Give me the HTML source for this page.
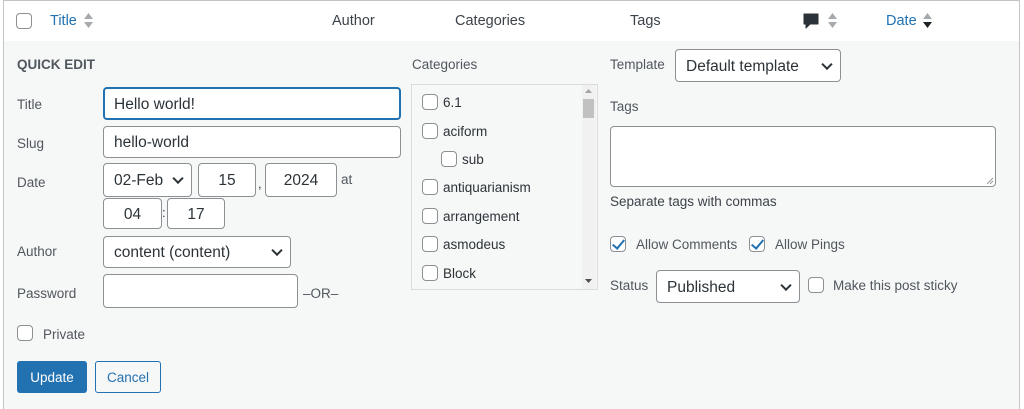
<!DOCTYPE html>
<html><head><meta charset="utf-8"><style>
*{box-sizing:border-box}
body{margin:0;width:1024px;height:409px;background:#fff;font-family:"Liberation Sans",Arial,sans-serif;font-size:14.5px;color:#3c434a;position:relative;overflow:hidden}
.a{position:absolute;white-space:nowrap}
.panel{position:absolute;left:3px;top:41px;width:1017px;height:368px;background:#f6f7f7;border-left:1px solid #c3c4c7;border-right:1px solid #c3c4c7}
.hdr{position:absolute;left:3px;top:0;width:1017px;height:42px;border:1px solid #c3c4c7;background:#fff}
.cb{position:absolute;width:16px;height:16px;border:1px solid #8c8f94;border-radius:4px;background:#fff}
.in{position:absolute;border:1px solid #8c8f94;border-radius:4px;background:#fff;font-size:15.5px;color:#2c3338;padding-left:10px;padding-top:2px;display:flex;align-items:center}
.c{justify-content:center;padding-left:0}
.lbl{position:absolute;font-size:13.5px;color:#50575e;white-space:nowrap}
.chev{position:absolute;right:9px;top:50%;width:8px;height:8px;border-right:2px solid #2c3338;border-bottom:2px solid #2c3338;transform:translateY(-70%) rotate(45deg)}
.ck::after{content:"";position:absolute;left:4px;top:0px;width:5px;height:10px;border-right:2px solid #2271b1;border-bottom:2px solid #2271b1;transform:rotate(40deg)}
.item{position:absolute;font-size:13.5px;color:#2c3338}
</style></head><body>
<div class="hdr"></div>
<div class="cb" style="left:16px;top:13px"></div>
<div class="a" style="left:50px;top:13px;color:#2271b1">Title</div>
<svg class="a" style="left:84px;top:12px" width="9" height="17"><path d="M0 7L4.5 1L9 7Z M0 10L4.5 16L9 10Z" fill="#a7aaad"/></svg>
<div class="a" style="left:332px;top:13px">Author</div>
<div class="a" style="left:455px;top:13px">Categories</div>
<div class="a" style="left:630px;top:13px">Tags</div>
<svg class="a" style="left:803px;top:13px" width="16" height="17"><path d="M1 1H15V11H7L3 15V11H1Z" fill="#2c3338" stroke="#2c3338" stroke-linejoin="round"/></svg>
<svg class="a" style="left:828px;top:12px" width="9" height="17"><path d="M0 7L4.5 1L9 7Z M0 10L4.5 16L9 10Z" fill="#a7aaad"/></svg>
<div class="a" style="left:886px;top:13px;color:#2271b1">Date</div>
<svg class="a" style="left:923px;top:12px" width="9" height="17"><path d="M0 7L4.5 1L9 7Z" fill="#a7aaad"/><path d="M0 10L4.5 16L9 10Z" fill="#1d2327"/></svg>

<div class="panel"></div>
<div class="lbl" style="left:17px;top:57px;font-weight:bold;color:#50575e">QUICK EDIT</div>
<div class="lbl" style="left:17px;top:97px">Title</div>
<div class="in" style="left:103px;top:87px;width:298px;height:33px;border:2px solid #2271b1;padding-left:9px">Hello world!</div>
<div class="lbl" style="left:17px;top:136px">Slug</div>
<div class="in" style="left:103px;top:126px;width:298px;height:32px">hello-world</div>
<div class="lbl" style="left:17px;top:175px">Date</div>
<div class="in" style="left:103px;top:163px;width:89px;height:34px">02-Feb<span class="chev"></span></div>
<div class="in c" style="left:198px;top:163px;width:58px;height:34px">15</div>
<div class="a" style="left:258px;top:176px;font-size:13px">,</div>
<div class="in c" style="left:265px;top:163px;width:72px;height:34px">2024</div>
<div class="lbl" style="left:341px;top:172px">at</div>
<div class="in c" style="left:103px;top:198px;width:59px;height:31px">04</div>
<div class="a" style="left:162px;top:205px;font-size:13px">:</div>
<div class="in c" style="left:167px;top:198px;width:58px;height:31px">17</div>
<div class="lbl" style="left:17px;top:244px">Author</div>
<div class="in" style="left:103px;top:236px;width:188px;height:32px">content (content)<span class="chev"></span></div>
<div class="lbl" style="left:17px;top:286px">Password</div>
<div class="in" style="left:103px;top:274px;width:195px;height:34px"></div>
<div class="lbl" style="left:303px;top:286px">–OR–</div>
<div class="cb" style="left:17px;top:325px"></div>
<div class="lbl" style="left:43px;top:327px">Private</div>
<div class="a" style="left:17px;top:361px;width:70px;height:32px;background:#2271b1;border-radius:3px;color:#fff;font-size:13.5px;display:flex;align-items:center;justify-content:center">Update</div>
<div class="a" style="left:95px;top:361px;width:66px;height:32px;border:1px solid #2271b1;border-radius:3px;color:#2271b1;font-size:13.5px;display:flex;align-items:center;justify-content:center;background:#f6f7f7">Cancel</div>

<div class="lbl" style="left:412px;top:57px">Categories</div>
<div class="a" style="left:411px;top:84px;width:187px;height:206px;border:1px solid #dcdcde;background:#f6f7f7"></div>
<div class="a" style="left:582px;top:85px;width:14px;height:204px;background:#f1f1f1"></div>
<div class="a" style="left:583px;top:99px;width:11px;height:19px;background:#c1c1c1"></div>
<svg class="a" style="left:585px;top:89px" width="7" height="5"><path d="M0 4L3.5 0L7 4Z" fill="#a3a3a3"/></svg>
<svg class="a" style="left:585px;top:279px" width="7" height="5"><path d="M0 0L3.5 4L7 0Z" fill="#505050"/></svg>
<div class="cb" style="left:422px;top:94px"></div><div class="item" style="left:443px;top:95px">6.1</div>
<div class="cb" style="left:422px;top:123px"></div><div class="item" style="left:443px;top:124px">aciform</div>
<div class="cb" style="left:441px;top:151px"></div><div class="item" style="left:462px;top:152px">sub</div>
<div class="cb" style="left:422px;top:179px"></div><div class="item" style="left:443px;top:180px">antiquarianism</div>
<div class="cb" style="left:422px;top:208px"></div><div class="item" style="left:443px;top:209px">arrangement</div>
<div class="cb" style="left:422px;top:236px"></div><div class="item" style="left:443px;top:237px">asmodeus</div>
<div class="cb" style="left:422px;top:265px"></div><div class="item" style="left:443px;top:266px">Block</div>

<div class="lbl" style="left:610px;top:57px">Template</div>
<div class="in" style="left:675px;top:49px;width:166px;height:33px">Default template<span class="chev"></span></div>
<div class="lbl" style="left:610px;top:99px">Tags</div>
<div class="a" style="left:610px;top:126px;width:386px;height:61px;border:1px solid #8c8f94;border-radius:4px;background:#fff"></div>
<svg class="a" style="left:986px;top:177px" width="8" height="8"><path d="M7 1L1 7M7 4L4 7" stroke="#999" stroke-width="1"/></svg>
<div class="lbl" style="left:610px;top:194px;color:#3c434a">Separate tags with commas</div>
<div class="cb ck" style="left:610px;top:236px"></div>
<div class="lbl" style="left:636px;top:237px">Allow Comments</div>
<div class="cb ck" style="left:749px;top:236px"></div>
<div class="lbl" style="left:775px;top:237px">Allow Pings</div>
<div class="lbl" style="left:610px;top:278px">Status</div>
<div class="in" style="left:656px;top:270px;width:144px;height:33px">Published<span class="chev"></span></div>
<div class="cb" style="left:808px;top:277px"></div>
<div class="lbl" style="left:833px;top:278px">Make this post sticky</div>
</body></html>
